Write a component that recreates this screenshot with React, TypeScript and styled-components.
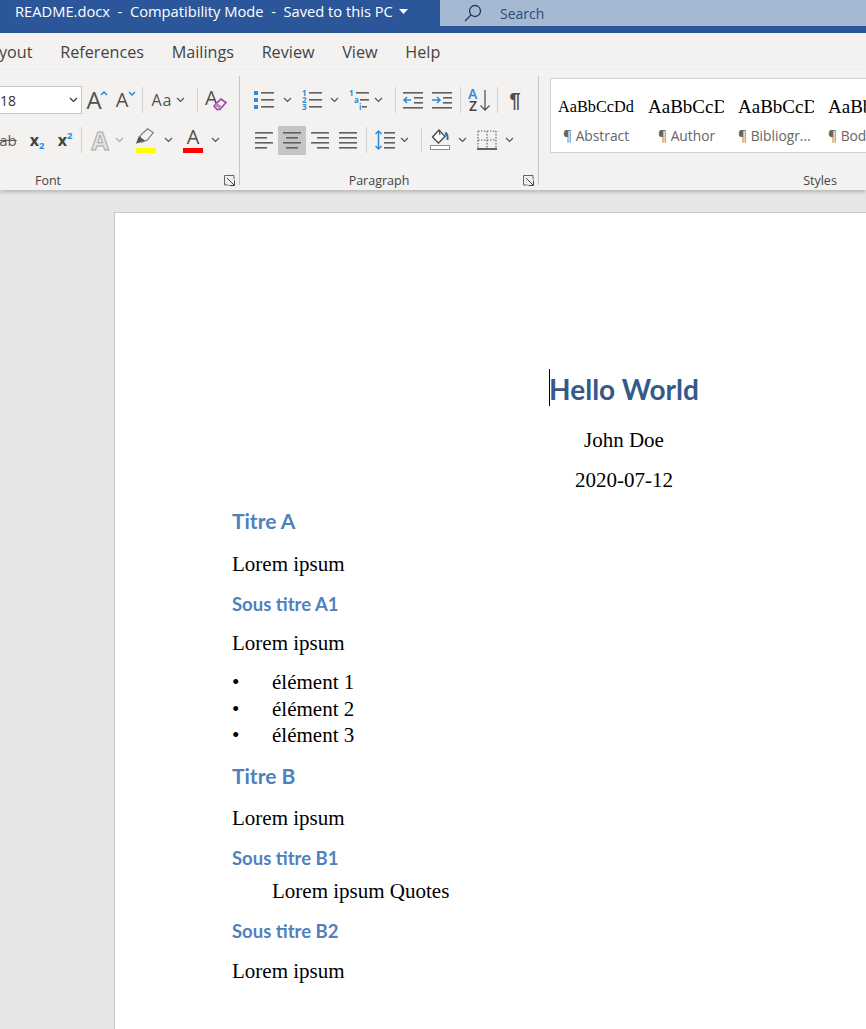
import React from "react";
import styled, { createGlobalStyle } from "styled-components";

const GlobalStyle = createGlobalStyle`
html, body { margin: 0; padding: 0; background: #e6e6e6; }
`;

const UI_FONT = `"Open Sans", "Noto Sans", sans-serif`;
const DOC_FONT = `"Liberation Serif", serif`;
const HEAD_FONT = `Lato, "Open Sans", sans-serif`;

const Window = styled.div`
  width: 866px;
  height: 1029px;
  overflow: hidden;
  display: flex;
  flex-direction: column;
  background: #e6e6e6;
  font-family: ${UI_FONT};
`;

const TitleBar = styled.div`
  height: 33px;
  flex-shrink: 0;
  background: #2b579a;
  display: flex;
  align-items: flex-start;
  color: #fff;
`;
const DocName = styled.div`
  width: 425px;
  height: 22px;
  padding-left: 15px;
  display: flex;
  align-items: center;
  gap: 6px;
  font-size: 14.7px;
  white-space: pre;
`;
const SearchBox = styled.div`
  flex: 1;
  height: 26px;
  background: #a5b9d2;
  display: flex;
  align-items: center;
  padding-left: 24px;
  gap: 18px;
  font-size: 14px;
  color: #2b4a7a;
`;

const TabStrip = styled.div`
  height: 37px;
  flex-shrink: 0;
  background: #f3f2f1;
  display: flex;
  align-items: center;
  gap: 27.7px;
  margin-left: -18.5px;
  font-size: 16.2px;
  color: #444;
  white-space: nowrap;
`;

const Ribbon = styled.div`
  height: 120px;
  flex-shrink: 0;
  padding-top: 6px;
  box-sizing: border-box;
  background: #f3f2f1;
  display: flex;
  box-shadow: 0 2px 4px rgba(0, 0, 0, 0.22);
  position: relative;
  z-index: 1;
`;
const Group = styled.section<{ $w: number; $ml?: number; $last?: boolean }>`
  width: ${(p) => p.$w}px;
  margin-left: ${(p) => p.$ml ?? 0}px;
  flex-shrink: 0;
  box-sizing: border-box;
  height: 109px;
  display: flex;
  flex-direction: column;
  border-right: ${(p) => (p.$last ? "none" : "1px solid #c8c6c4")};
`;
const Row = styled.div<{ $end?: number; $top: number }>`
  display: flex;
  align-items: center;
  height: 28px;
  flex-shrink: 0;
  margin-top: ${(p) => p.$top}px;
  justify-content: ${(p) => (p.$end !== undefined ? "flex-end" : "flex-start")};
  padding-right: ${(p) => p.$end ?? 0}px;
`;
const Tool = styled.div<{ $w: number; $ml?: number; $active?: boolean }>`
  width: ${(p) => p.$w}px;
  height: 29px;
  margin-left: ${(p) => p.$ml ?? 0}px;
  flex-shrink: 0;
  display: flex;
  align-items: center;
  justify-content: center;
  position: relative;
  background: ${(p) => (p.$active ? "#c5c5c5" : "transparent")};
  color: #555;
`;
const Sep = styled.div<{ $ml: number }>`
  width: 1px;
  height: 26px;
  flex-shrink: 0;
  margin-left: ${(p) => p.$ml}px;
  background: #d2d0ce;
`;
const FontSelect = styled.div`
  width: 120px;
  height: 28px;
  box-sizing: border-box;
  flex-shrink: 0;
  background: #fff;
  border: 1px solid #c8c6c4;
  display: flex;
  align-items: center;
  justify-content: space-between;
  padding: 0 3px 0 37px;
  font-size: 14px;
  color: #333;
`;
const LabelRow = styled.div<{ $top: number }>`
  display: flex;
  align-items: center;
  height: 14px;
  flex-shrink: 0;
  margin-top: ${(p) => p.$top}px;
`;
const GroupLabel = styled.div`
  flex: 1;
  text-align: center;
  font-size: 12.5px;
  color: #444;
`;
const Launcher = styled.div`
  width: 20px;
  display: flex;
  justify-content: center;
`;

const BigA = styled.span<{ $size: number }>`
  font-size: ${(p) => p.$size}px;
  line-height: 1;
  color: #505050;
  margin-right: 6px;
`;
const CaseText = styled.span`
  font-size: 16px;
  letter-spacing: 1px;
  color: #505050;
  margin-right: 3px;
`;
const Corner = styled.span`
  position: absolute;
  right: 2px;
  top: 5px;
  display: flex;
`;
const Struck = styled.span`
  font-size: 15px;
  color: #5c5c5c;
  text-decoration: line-through;
`;
const ScriptX = styled.span`
  font-size: 16px;
  font-weight: 700;
  color: #444;
`;
const ScriptMark = styled.span<{ $up?: boolean }>`
  font-size: 9.5px;
  font-weight: 700;
  color: #2b8ad8;
  position: relative;
  top: ${(p) => (p.$up ? -5 : 5)}px;
`;
const OutlineA = styled.span`
  font-size: 25px;
  font-weight: 700;
  color: #e3e3e3;
  -webkit-text-stroke: 1px #a8a8a8;
  line-height: 1;
`;
const ColorBar = styled.span<{ $color: string }>`
  position: absolute;
  left: 3px;
  right: 3px;
  bottom: 2px;
  height: 5px;
  background: ${(p) => p.$color};
`;
const RaisedA = styled.span`
  font-size: 20px;
  line-height: 1;
  color: #505050;
  margin-bottom: 7px;
`;
const Pilcrow = styled.span`
  font-family: "Liberation Sans", sans-serif;
  font-size: 20px;
  font-weight: 700;
  color: #505050;
`;

const Gallery = styled.div`
  height: 75px;
  flex-shrink: 0;
  margin: 2px 0 0 11px;
  box-sizing: border-box;
  background: #fff;
  border: 1px solid #d2d0ce;
  display: flex;
  padding-left: 7px;
`;
const StyleItem = styled.div`
  width: 90px;
  flex-shrink: 0;
  padding-top: 15px;
`;
const StylePreview = styled.div<{ $size: number }>`
  width: 76px;
  height: 26px;
  line-height: 26px;
  overflow: hidden;
  font-family: ${DOC_FONT};
  font-size: ${(p) => p.$size}px;
  white-space: nowrap;
  color: #000;
`;
const StyleCaption = styled.div<{ $pad: number }>`
  margin-top: 6px;
  padding-left: ${(p) => p.$pad}px;
  font-size: 13.8px;
  line-height: 20px;
  color: #666;
  white-space: nowrap;
`;

const Canvas = styled.div`
  flex: 1;
  padding: 22px 0 0 114px;
  display: flex;
  align-items: flex-start;
`;
const Page = styled.main`
  width: 1018px;
  height: 1200px;
  flex-shrink: 0;
  box-sizing: border-box;
  background: #fff;
  border: 1px solid #c6c6c6;
  padding: 156px 115px 0 117px;
`;
const DocTitle = styled.h1`
  margin: 0;
  text-align: center;
  font-family: ${HEAD_FONT};
  font-size: 28px;
  line-height: 40px;
  font-weight: 700;
  color: #345a8a;
`;
const CaretWrap = styled.span`
  position: relative;
`;
const Caret = styled.span`
  position: absolute;
  left: 0;
  top: -3px;
  width: 1px;
  height: 37px;
  background: #000;
`;
const Para = styled.p<{ $gap?: number; $center?: boolean; $indent?: boolean }>`
  margin: ${(p) => p.$gap ?? 14}px 0 0 ${(p) => (p.$indent ? 40 : 0)}px;
  font-family: ${DOC_FONT};
  font-size: 21px;
  line-height: 26px;
  color: #000;
  text-align: ${(p) => (p.$center ? "center" : "left")};
`;
const Heading = styled.h2<{ $gap?: number }>`
  margin: ${(p) => p.$gap ?? 13}px 0 0;
  font-family: ${HEAD_FONT};
  font-size: 21px;
  line-height: 30px;
  font-weight: 700;
  color: #4f81bd;
`;
const SubHeading = styled.h3<{ $gap?: number }>`
  margin: ${(p) => p.$gap ?? 14}px 0 0;
  font-family: ${HEAD_FONT};
  font-size: 18.5px;
  line-height: 26px;
  font-weight: 700;
  color: #4f81bd;
`;
const BulletList = styled.ul`
  list-style: none;
  margin: 13px 0 0;
  padding: 0;
`;
const BulletItem = styled.li`
  display: flex;
  font-family: ${DOC_FONT};
  font-size: 21px;
  line-height: 26.5px;
  color: #000;
  &::before {
    content: "•";
    width: 40px;
  }
`;

const GRAY = "#5f5f5f";
const BLUE = "#2b8ad8";

function Chevron({ color = "#555" }: { color?: string }) {
  return (
    <svg width="9" height="6" viewBox="0 0 9 6">
      <path d="M1 1l3.5 3.5L8 1" fill="none" stroke={color} strokeWidth="1.2" />
    </svg>
  );
}

function TinyChevron({ up }: { up?: boolean }) {
  return (
    <svg width="8" height="5" viewBox="0 0 8 5">
      <path d={up ? "M1 4l3-3 3 3" : "M1 1l3 3 3-3"} fill="none" stroke={BLUE} strokeWidth="1.5" />
    </svg>
  );
}

function Lines({ rows }: { rows: [number, number][] }) {
  return (
    <svg width="20" height="20" viewBox="0 0 20 20">
      {rows.map(([x1, x2], i) => (
        <rect key={i} x={x1} y={2 + i * 5} width={x2 - x1} height="1.6" fill={GRAY} />
      ))}
    </svg>
  );
}

function Bullets() {
  return (
    <svg width="20" height="20" viewBox="0 0 20 20">
      {[1, 8, 15].map((y) => (
        <g key={y}>
          <rect x="0" y={y} width="4" height="4" fill={BLUE} />
          <rect x="7" y={y + 1} width="13" height="1.6" fill={GRAY} />
        </g>
      ))}
    </svg>
  );
}

function Numbered() {
  return (
    <svg width="20" height="20" viewBox="0 0 20 20" fontFamily="Open Sans" fontWeight="700" fontSize="8" fill={BLUE}>
      <text x="0" y="6">1</text>
      <text x="0" y="13">2</text>
      <text x="0" y="20">3</text>
      {[2, 9, 16].map((y) => (
        <rect key={y} x="7" y={y} width="13" height="1.6" fill={GRAY} />
      ))}
    </svg>
  );
}

function Multilevel() {
  return (
    <svg width="20" height="20" viewBox="0 0 20 20" fontFamily="Open Sans" fontWeight="700" fontSize="8" fill={BLUE}>
      <text x="0" y="6">1</text>
      <text x="5" y="13">a</text>
      <text x="10" y="20">i</text>
      <rect x="7" y="2" width="13" height="1.6" fill={GRAY} />
      <rect x="11" y="9" width="9" height="1.6" fill={GRAY} />
      <rect x="13" y="16" width="5" height="1.6" fill={GRAY} />
    </svg>
  );
}

function Indent({ grow }: { grow?: boolean }) {
  return (
    <svg width="20" height="20" viewBox="0 0 20 20">
      <rect x="0" y="2" width="20" height="1.6" fill={GRAY} />
      <rect x="11" y="7" width="9" height="1.6" fill={GRAY} />
      <rect x="11" y="12" width="9" height="1.6" fill={GRAY} />
      <rect x="0" y="17" width="20" height="1.6" fill={GRAY} />
      <path
        d={grow ? "M0 10h8M5 7l3 3-3 3" : "M8 10H1M4 7l-3 3 3 3"}
        fill="none"
        stroke={BLUE}
        strokeWidth="1.5"
      />
    </svg>
  );
}

function SortIcon() {
  return (
    <svg width="22" height="24" viewBox="0 0 22 24" fontFamily="Open Sans" fontWeight="600" fontSize="14">
      <text x="0" y="11" fill={BLUE}>A</text>
      <text x="1" y="23" fill="#444">Z</text>
      <path d="M17 2v20M12.5 17.5L17 22l4.5-4.5" fill="none" stroke="#555" strokeWidth="1.3" />
    </svg>
  );
}

function LineSpacing() {
  return (
    <svg width="20" height="22" viewBox="0 0 20 22">
      <path d="M3.5 2v18M0.5 5l3-3 3 3M0.5 17l3 3 3-3" fill="none" stroke={BLUE} strokeWidth="1.5" />
      {[3, 8, 13, 18].map((y) => (
        <rect key={y} x="9" y={y} width="11" height="1.6" fill={GRAY} />
      ))}
    </svg>
  );
}

function Shading() {
  return (
    <svg width="21" height="22" viewBox="0 0 21 22">
      <path d="M9 1L2.5 8l6 6 6.5-6.5z" fill="#fff" stroke="#444" strokeWidth="1.3" />
      <path d="M9 1l1 5" stroke="#444" strokeWidth="1.1" />
      <path d="M15 3c2 0 3.5 2 3.5 4.5v3.5h-2V7.5L15 6z" fill="#2a6fb5" />
      <rect x="0.5" y="16.5" width="19" height="4" fill="#fff" stroke="#8f8f8f" />
    </svg>
  );
}

function BordersIcon() {
  return (
    <svg width="20" height="20" viewBox="0 0 20 20" fill="none">
      <path d="M1 1h18M1 1v18M19 1v18M10 1v18M1 10h18" stroke="#666" strokeWidth="1.2" strokeDasharray="1.5 1.5" />
      <path d="M0 19h20" stroke="#333" strokeWidth="1.5" />
    </svg>
  );
}

function Eraser() {
  return (
    <svg width="22" height="22" viewBox="0 0 22 22">
      <text x="0" y="16" fontFamily="Open Sans" fontSize="20" fill="#505050">A</text>
      <path d="M9 17l7-7 5 3.5-6 7h-3z" fill="#f3f2f1" stroke="#a33ea1" strokeWidth="1.6" />
      <path d="M9.5 16.5l5.5 3.5 2-2.5-5-3.5z" fill="#c486c3" />
    </svg>
  );
}

const PenSvg = styled.svg`
  margin-bottom: 7px;
`;

function Highlighter() {
  return (
    <PenSvg width="20" height="17" viewBox="0 0 18 15">
      <path d="M2 12l2.5-6 6-5.5 5 3.5-5 6.5-5 2z" fill="#f3f2f1" stroke="#777" strokeWidth="1" />
      <path d="M0 14l2.5-7 5.5 4z" fill="#555" />
    </PenSvg>
  );
}

function DialogLauncher() {
  return (
    <svg width="11" height="11" viewBox="0 0 11 11" fill="none">
      <path d="M10 4.5V.5H.5V10H4.5" stroke="#666" />
      <path d="M3 3l7 7M5.5 10.5h5v-5" stroke="#444" />
    </svg>
  );
}

function Magnifier() {
  return (
    <svg width="18" height="18" viewBox="0 0 18 18" fill="none" stroke="#1f3864" strokeWidth="1.3">
      <circle cx="11" cy="7" r="5.5" />
      <path d="M7 11L1 17" />
    </svg>
  );
}

const STYLE_ITEMS = [
  { name: "Abstract", size: 16.3, pad: 5 },
  { name: "Author", size: 19, pad: 10 },
  { name: "Bibliogr...", size: 19, pad: 0 },
  { name: "Bod", size: 19, pad: 0 },
];

export default function App() {
  return (
    <Window>
      <GlobalStyle />
      <TitleBar>
        <DocName>
          README.docx  -  Compatibility Mode  -  Saved to this PC
          <svg width="9" height="5" viewBox="0 0 9 5">
            <path d="M0 0h9L4.5 5z" fill="#fff" />
          </svg>
        </DocName>
        <SearchBox>
          <Magnifier />
          Search
        </SearchBox>
      </TitleBar>

      <TabStrip>
        <span>Layout</span>
        <span>References</span>
        <span>Mailings</span>
        <span>Review</span>
        <span>View</span>
        <span>Help</span>
      </TabStrip>

      <Ribbon>
        <Group $w={363} $ml={-123}>
          <Row $top={10} $end={7}>
            <FontSelect>
              18
              <Chevron color="#333" />
            </FontSelect>
            <Tool $w={26} $ml={2}>
              <BigA $size={24}>A</BigA>
              <Corner><TinyChevron up /></Corner>
            </Tool>
            <Tool $w={26} $ml={2}>
              <BigA $size={20}>A</BigA>
              <Corner><TinyChevron /></Corner>
            </Tool>
            <Sep $ml={4} />
            <Tool $w={44} $ml={3}>
              <CaseText>Aa</CaseText>
              <Chevron />
            </Tool>
            <Sep $ml={7} />
            <Tool $w={32} $ml={2}>
              <Eraser />
            </Tool>
          </Row>
          <Row $top={12} $end={18}>
            <Tool $w={24}><Struck>ab</Struck></Tool>
            <Tool $w={26} $ml={4}>
              <ScriptX>x</ScriptX>
              <ScriptMark>2</ScriptMark>
            </Tool>
            <Tool $w={26} $ml={2}>
              <ScriptX>x</ScriptX>
              <ScriptMark $up>2</ScriptMark>
            </Tool>
            <Sep $ml={3} />
            <Tool $w={26} $ml={5}><OutlineA>A</OutlineA></Tool>
            <Tool $w={12}><Chevron color="#aaa" /></Tool>
            <Tool $w={26} $ml={8}>
              <Highlighter />
              <ColorBar $color="#ffff00" />
            </Tool>
            <Tool $w={12} $ml={3}><Chevron /></Tool>
            <Tool $w={26} $ml={6}>
              <RaisedA>A</RaisedA>
              <ColorBar $color="#ff0000" />
            </Tool>
            <Tool $w={12} $ml={3}><Chevron /></Tool>
          </Row>
          <LabelRow $top={19}>
            <GroupLabel>Font</GroupLabel>
            <Launcher><DialogLauncher /></Launcher>
          </LabelRow>
        </Group>

        <Group $w={299}>
          <Row $top={10}>
            <Tool $w={24} $ml={12}><Bullets /></Tool>
            <Tool $w={12} $ml={5}><Chevron /></Tool>
            <Tool $w={24} $ml={7}><Numbered /></Tool>
            <Tool $w={12} $ml={4}><Chevron /></Tool>
            <Tool $w={24} $ml={7}><Multilevel /></Tool>
            <Tool $w={12} $ml={1}><Chevron /></Tool>
            <Sep $ml={11} />
            <Tool $w={24} $ml={5}><Indent /></Tool>
            <Tool $w={24} $ml={5}><Indent grow /></Tool>
            <Sep $ml={6} />
            <Tool $w={24} $ml={6}><SortIcon /></Tool>
            <Sep $ml={6} />
            <Tool $w={24} $ml={5}><Pilcrow>¶</Pilcrow></Tool>
          </Row>
          <Row $top={12}>
            <Tool $w={28} $ml={10}><Lines rows={[[1, 19], [1, 13], [1, 19], [1, 13]]} /></Tool>
            <Tool $w={28} $active><Lines rows={[[1, 19], [4, 16], [1, 19], [4, 16]]} /></Tool>
            <Tool $w={28}><Lines rows={[[1, 19], [7, 19], [1, 19], [7, 19]]} /></Tool>
            <Tool $w={28}><Lines rows={[[1, 19], [1, 19], [1, 19], [1, 19]]} /></Tool>
            <Sep $ml={4} />
            <Tool $w={24} $ml={6}><LineSpacing /></Tool>
            <Tool $w={12} $ml={1}><Chevron /></Tool>
            <Sep $ml={11} />
            <Tool $w={24} $ml={6}><Shading /></Tool>
            <Tool $w={12} $ml={4}><Chevron /></Tool>
            <Tool $w={24} $ml={7}><BordersIcon /></Tool>
            <Tool $w={12} $ml={4}><Chevron /></Tool>
          </Row>
          <LabelRow $top={19}>
            <GroupLabel>Paragraph</GroupLabel>
            <Launcher><DialogLauncher /></Launcher>
          </LabelRow>
        </Group>

        <Group $w={562} $last>
          <Gallery>
            {STYLE_ITEMS.map((item) => (
              <StyleItem key={item.name}>
                <StylePreview $size={item.size}>AaBbCcDd</StylePreview>
                <StyleCaption $pad={item.pad}>¶ {item.name}</StyleCaption>
              </StyleItem>
            ))}
          </Gallery>
          <LabelRow $top={20}>
            <GroupLabel>Styles</GroupLabel>
          </LabelRow>
        </Group>
      </Ribbon>

      <Canvas>
        <Page>
          <DocTitle>
            <CaretWrap><Caret /></CaretWrap>Hello World
          </DocTitle>
          <Para $gap={18} $center>John Doe</Para>
          <Para $center>2020-07-12</Para>
          <Heading>Titre A</Heading>
          <Para $gap={15}>Lorem ipsum</Para>
          <SubHeading>Sous titre A1</SubHeading>
          <Para $gap={13}>Lorem ipsum</Para>
          <BulletList>
            <BulletItem>élément 1</BulletItem>
            <BulletItem>élément 2</BulletItem>
            <BulletItem>élément 3</BulletItem>
          </BulletList>
          <Heading $gap={12}>Titre B</Heading>
          <Para $gap={14}>Lorem ipsum</Para>
          <SubHeading>Sous titre B1</SubHeading>
          <Para $gap={7} $indent>Lorem ipsum Quotes</Para>
          <SubHeading>Sous titre B2</SubHeading>
          <Para>Lorem ipsum</Para>
        </Page>
      </Canvas>
    </Window>
  );
}
